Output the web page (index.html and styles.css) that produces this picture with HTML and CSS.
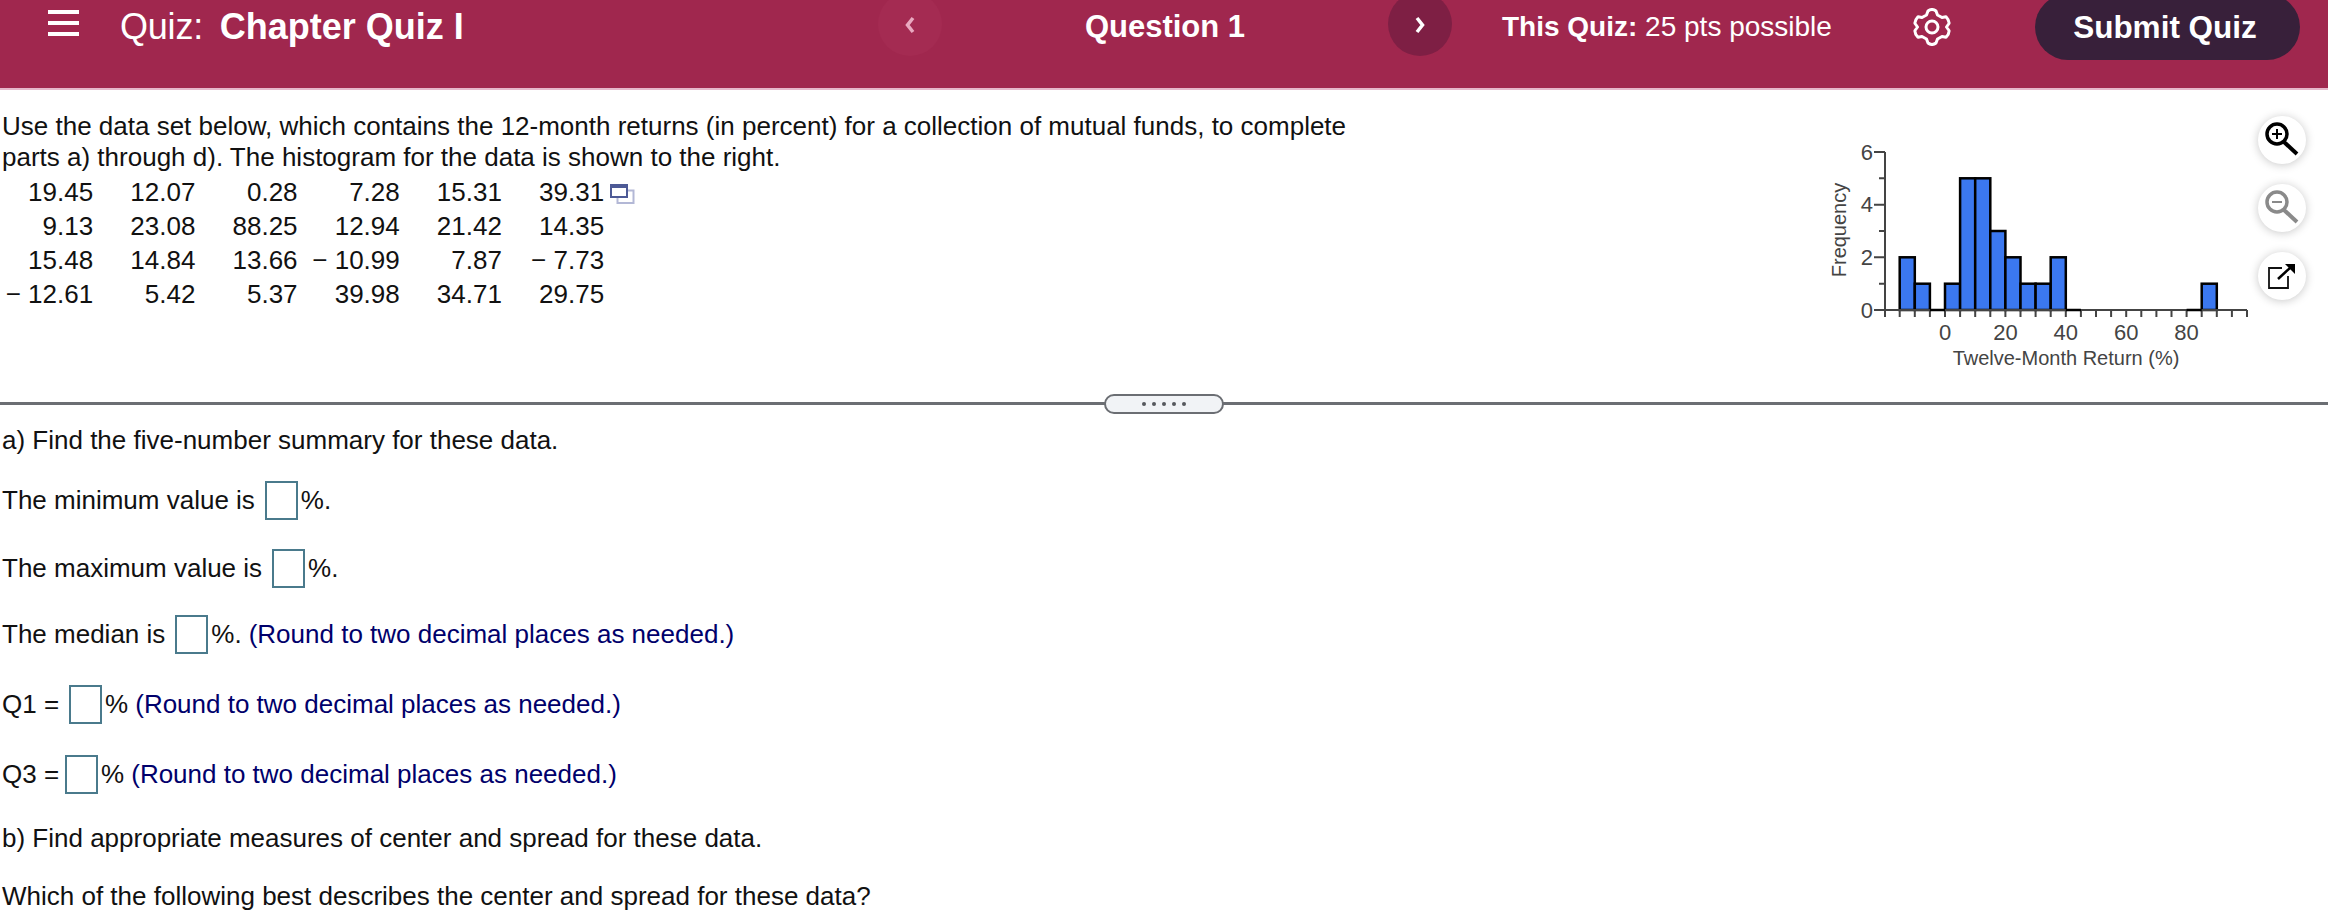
FILE: index.html
```html
<!DOCTYPE html>
<html lang="en">
<head>
    <meta charset="UTF-8">
    <title>Quiz: Chapter Quiz I</title>
    <link rel="stylesheet" href="styles.css">
</head>
<body>
    <!-- TOP BAR -->
    <header class="quiz-bar">
        <div class="bar-left">
            <button class="menu-btn"><span></span><span></span><span></span></button>
            <div class="quiz-title">Quiz: <b>Chapter Quiz I</b></div>
        </div>
        <button class="nav-btn prev">
            <svg width="14" height="18" viewBox="0 0 14 18"><path d="M10 2 L4.500 9 L10 16" fill="none" stroke="#e9a9c0" stroke-width="3.500"/></svg>
        </button>
        <div class="question-name">Question 1</div>
        <button class="nav-btn next">
            <svg width="14" height="18" viewBox="0 0 14 18"><path d="M4 2 L9.500 9 L4 16" fill="none" stroke="#fff" stroke-width="3.500"/></svg>
        </button>
        <div class="quiz-points"><b>This Quiz:</b> 25 pts possible</div>
        <svg class="gear" width="38" height="38" viewBox="0 0 38 38">
            <path d="M15 3 Q19 0 23 3 L24.500 7 L29 9.500 L33 8.700 Q36.500 12.500 36 15.500 L33.500 19 L36 22.500 Q36.500 25.500 33 29.300 L29 28.500 L24.500 31 L23 35 Q19 38 15 35 L13.500 31 L9 28.500 L5 29.300 Q1.500 25.500 2 22.500 L4.500 19 L2 15.500 Q1.500 12.500 5 8.700 L9 9.500 L13.500 7 Z" fill="none" stroke="#fff" stroke-width="3" stroke-linejoin="round"/>
            <circle cx="19" cy="19" r="6" fill="none" stroke="#fff" stroke-width="3"/>
        </svg>
        <button class="submit-btn">Submit Quiz</button>
    </header>

    <!-- QUESTION DATA -->
    <section class="data-pane">
        <div class="prompt">
            <p>Use the data set below, which contains the 12-month returns (in percent) for a collection of mutual funds, to complete parts a) through d). The histogram for the data is shown to the right.</p>
            <div class="table-wrap">
                <table class="data-table">
                    <tr><td>19.45</td><td>12.07</td><td>0.28</td><td>7.28</td><td>15.31</td><td>39.31</td></tr>
                    <tr><td>9.13</td><td>23.08</td><td>88.25</td><td>12.94</td><td>21.42</td><td>14.35</td></tr>
                    <tr><td>15.48</td><td>14.84</td><td>13.66</td><td>− 10.99</td><td>7.87</td><td>− 7.73</td></tr>
                    <tr><td>− 12.61</td><td>5.42</td><td>5.37</td><td>39.98</td><td>34.71</td><td>29.75</td></tr>
                </table>
                <svg class="copy-icon" width="25" height="20" viewBox="0 0 25 20">
                    <rect x="7.500" y="6.500" width="16" height="12.500" fill="#fff" stroke="#b3b8d6" stroke-width="2"/>
                    <rect x="1" y="1" width="16" height="12" fill="#fff" stroke="#4d5a96" stroke-width="2"/>
                    <rect x="0" y="0" width="18" height="4" fill="#4d5a96"/>
                </svg>
            </div>
        </div>

        <svg class="histogram" width="528" height="270" viewBox="0 0 528 270">
            <g fill="#3b78f0" stroke="#000" stroke-width="2.500">
                <rect x="99.700" y="137.300" width="15.100" height="52.700"/>
                <rect x="114.800" y="163.700" width="15.100" height="26.300"/>
                <rect x="145" y="163.700" width="15.100" height="26.300"/>
                <rect x="160.100" y="58.300" width="15.100" height="131.700"/>
                <rect x="175.200" y="58.300" width="15.100" height="131.700"/>
                <rect x="190.300" y="111" width="15.100" height="79"/>
                <rect x="205.400" y="137.300" width="15.100" height="52.700"/>
                <rect x="220.500" y="163.700" width="15.100" height="26.300"/>
                <rect x="235.600" y="163.700" width="15.100" height="26.300"/>
                <rect x="250.700" y="137.300" width="15.100" height="52.700"/>
                <rect x="401.700" y="163.700" width="15.100" height="26.300"/>
            </g>
            <path d="M85 32 V190 H447" fill="none" stroke="#444" stroke-width="2"/>
            <path d="M74 32 H85 M79 58.300 H85 M74 84.700 H85 M79 111 H85 M74 137.300 H85 M79 163.700 H85 M74 190 H85" stroke="#444" stroke-width="2"/>
            <path d="M85 190 v7 M99.700 190 v7 M114.800 190 v7 M129.900 190 v7 M145 190 v7 M160.100 190 v7 M175.200 190 v7 M190.300 190 v7 M205.400 190 v7 M220.500 190 v7 M235.600 190 v7 M250.700 190 v7 M265.800 190 v7 M280.900 190 v7 M296 190 v7 M311.100 190 v7 M326.200 190 v7 M341.300 190 v7 M356.400 190 v7 M371.500 190 v7 M386.600 190 v7 M401.700 190 v7 M416.800 190 v7 M431.900 190 v7 M447 190 v7" stroke="#444" stroke-width="2"/>
            <path d="M129.900 190 H145 M265.800 190 H280.900 M386.600 190 H401.700" stroke="#000" stroke-width="2.500"/>
            <g class="axis-nums y-nums">
                <text x="73" y="40">6</text>
                <text x="73" y="92">4</text>
                <text x="73" y="145">2</text>
                <text x="73" y="198">0</text>
            </g>
            <g class="axis-nums x-nums">
                <text x="145" y="220">0</text>
                <text x="205.400" y="220">20</text>
                <text x="265.800" y="220">40</text>
                <text x="326.200" y="220">60</text>
                <text x="386.600" y="220">80</text>
            </g>
            <text class="axis-title" x="266" y="245">Twelve-Month Return (%)</text>
            <text class="axis-title" transform="translate(46 110) rotate(-90)">Frequency</text>
        </svg>
    </section>

    <!-- PANE DIVIDER -->
    <div class="divider">
        <div class="handle"><i></i><i></i><i></i><i></i><i></i></div>
    </div>

    <!-- ANSWERS -->
    <section class="answers">
        <p class="line">a) Find the five-number summary for these data.</p>
        <div class="row row-min">The minimum value is<input class="blank" type="text">%.</div>
        <div class="row row-max">The maximum value is<input class="blank" type="text">%.</div>
        <div class="row row-med">The median is<input class="blank" type="text">%.<span class="hint">(Round to two decimal places as needed.)</span></div>
        <div class="row row-q1">Q1 =<input class="blank" type="text">%<span class="hint">(Round to two decimal places as needed.)</span></div>
        <div class="row row-q3">Q3 =<input class="blank" type="text">%<span class="hint">(Round to two decimal places as needed.)</span></div>
        <p class="line part-b">b) Find appropriate measures of center and spread for these data.</p>
        <p class="line which">Which of the following best describes the center and spread for these data?</p>
    </section>

    <!-- FLOATING TOOLS -->
    <div class="tools">
        <button class="tool-btn">
            <svg width="36" height="36" viewBox="0 0 36 36">
                <circle cx="13" cy="12" r="10" fill="none" stroke="#000" stroke-width="3.500"/>
                <path d="M20 20 L33 32" stroke="#000" stroke-width="4"/>
                <path d="M8 12 H18 M13 7 V17" stroke="#000" stroke-width="2"/>
            </svg>
        </button>
        <button class="tool-btn">
            <svg width="36" height="36" viewBox="0 0 36 36">
                <circle cx="13" cy="12" r="10" fill="none" stroke="#8a8a8a" stroke-width="3.500"/>
                <path d="M20 20 L33 32" stroke="#8a8a8a" stroke-width="4"/>
                <path d="M8 12 H18" stroke="#8a8a8a" stroke-width="2"/>
            </svg>
        </button>
        <button class="tool-btn">
            <svg width="36" height="36" viewBox="0 0 36 36">
                <path d="M18 10 H5 V30 H24 V18" fill="none" stroke="#111" stroke-width="1.800"/>
                <path d="M14 21 L27 9" stroke="#000" stroke-width="2.500"/>
                <path d="M21 6 H31 V16 Z" fill="#000"/>
            </svg>
        </button>
    </div>
</body>
</html>
```

FILE: styles.css
```css
html, body {
    margin: 0;
    height: 921px;
    overflow: hidden;
}
body {
    position: relative;
    font-family: "Liberation Sans", Arial, sans-serif;
    font-size: 26px;
    color: #111;
    background-color: #fff;
}
button {
    font-family: inherit;
    border: none;
    padding: 0;
}
p {
    margin: 0;
}

/* top bar */
.quiz-bar {
    box-sizing: border-box;
    height: 90px;
    padding-bottom: 34px;
    display: flex;
    align-items: center;
    background-color: #a0274e;
    border-bottom: 2px solid #e6b7ca;
    color: #fff;
}
.bar-left {
    width: 878px;
    display: flex;
    align-items: center;
}
.menu-btn {
    width: 31px;
    margin: 0 0 8px 48px;
    display: flex;
    flex-direction: column;
    gap: 7px;
    background: none;
}
.menu-btn span {
    height: 4px;
    background-color: #fff;
}
.quiz-title {
    margin-left: 41px;
    font-size: 36px;
    white-space: pre;
    letter-spacing: -0.2px;
}
.quiz-title b {
    margin-left: 7px;
    letter-spacing: 0;
}
.nav-btn {
    width: 64px;
    height: 64px;
    flex: none;
    margin-bottom: 6px;
    border-radius: 50%;
    display: flex;
    align-items: center;
    justify-content: center;
    padding-top: 2px;
}
.nav-btn.prev {
    background-color: #a42b52;
}
.nav-btn.next {
    background-color: #7e1f44;
}
.question-name {
    width: 446px;
    text-align: center;
    font-size: 31px;
    font-weight: bold;
}
.quiz-points {
    width: 411px;
    margin-left: 50px;
    font-size: 28px;
}
.gear {
    flex: none;
}
.submit-btn {
    width: 265px;
    height: 66px;
    margin-left: 84px;
    flex: none;
    padding-right: 5px;
    border-radius: 33px;
    background-color: #38203a;
    color: #fff;
    font-size: 31.500px;
    font-weight: bold;
}

/* data section */
.data-pane {
    box-sizing: border-box;
    height: 312px;
    display: flex;
    justify-content: space-between;
    padding-top: 21px;
}
.prompt {
    width: 1350px;
    padding-left: 2px;
    line-height: 31px;
}
.table-wrap {
    margin-top: 2px;
    display: flex;
    align-items: flex-start;
}
.data-table {
    border-collapse: collapse;
    margin-left: -11px;
}
.data-table td {
    width: 102.200px;
    height: 34px;
    padding: 0;
    text-align: right;
    line-height: 34px;
    white-space: nowrap;
}
.copy-icon {
    margin: 9px 0 0 6px;
}
.histogram {
    margin-top: 9px;
    flex: none;
}
.axis-nums {
    font-size: 22px;
    fill: #444;
}
.axis-title {
    font-size: 20px;
    fill: #444;
}
.y-nums {
    text-anchor: end;
}
.x-nums, .axis-title {
    text-anchor: middle;
}

/* divider */
.divider {
    height: 3px;
    background-color: #6b6e73;
    display: flex;
    justify-content: center;
    align-items: center;
}
.handle {
    box-sizing: border-box;
    width: 120px;
    height: 20px;
    flex: none;
    display: flex;
    justify-content: center;
    align-items: center;
    gap: 6px;
    background-color: #f1f3f6;
    border: 2px solid #6b6e73;
    border-radius: 10px;
}
.handle i {
    width: 4px;
    height: 4px;
    border-radius: 50%;
    background-color: #55585d;
}

/* answers */
.answers {
    padding: 20px 0 0 2px;
    line-height: 31px;
}
.row {
    height: 39px;
    display: flex;
    align-items: center;
    white-space: pre;
}
.blank {
    box-sizing: border-box;
    width: 33px;
    height: 39px;
    margin: 0 3px 0 10px;
    padding: 0;
    border: 2px solid #4a7a8c;
    background-color: #fff;
}
.hint {
    margin-left: 7px;
    color: #00006b;
}
.row-min { margin-top: 25px; }
.row-max { margin-top: 29px; }
.row-med { margin-top: 27px; }
.row-q1 { margin-top: 31px; }
.row-q3 { margin-top: 31px; }
.row-q3 .blank { margin-left: 6px; }
.part-b { margin-top: 29px; }
.which { margin-top: 27px; }

/* floating tools */
.tools {
    position: absolute;
    top: 116px;
    left: 2258px;
    display: flex;
    flex-direction: column;
    gap: 20px;
}
.tool-btn {
    width: 48px;
    height: 48px;
    border-radius: 50%;
    background-color: #fff;
    box-shadow: 0 1px 10px rgba(0, 0, 0, 0.22);
    display: flex;
    align-items: center;
    justify-content: center;
}
```
